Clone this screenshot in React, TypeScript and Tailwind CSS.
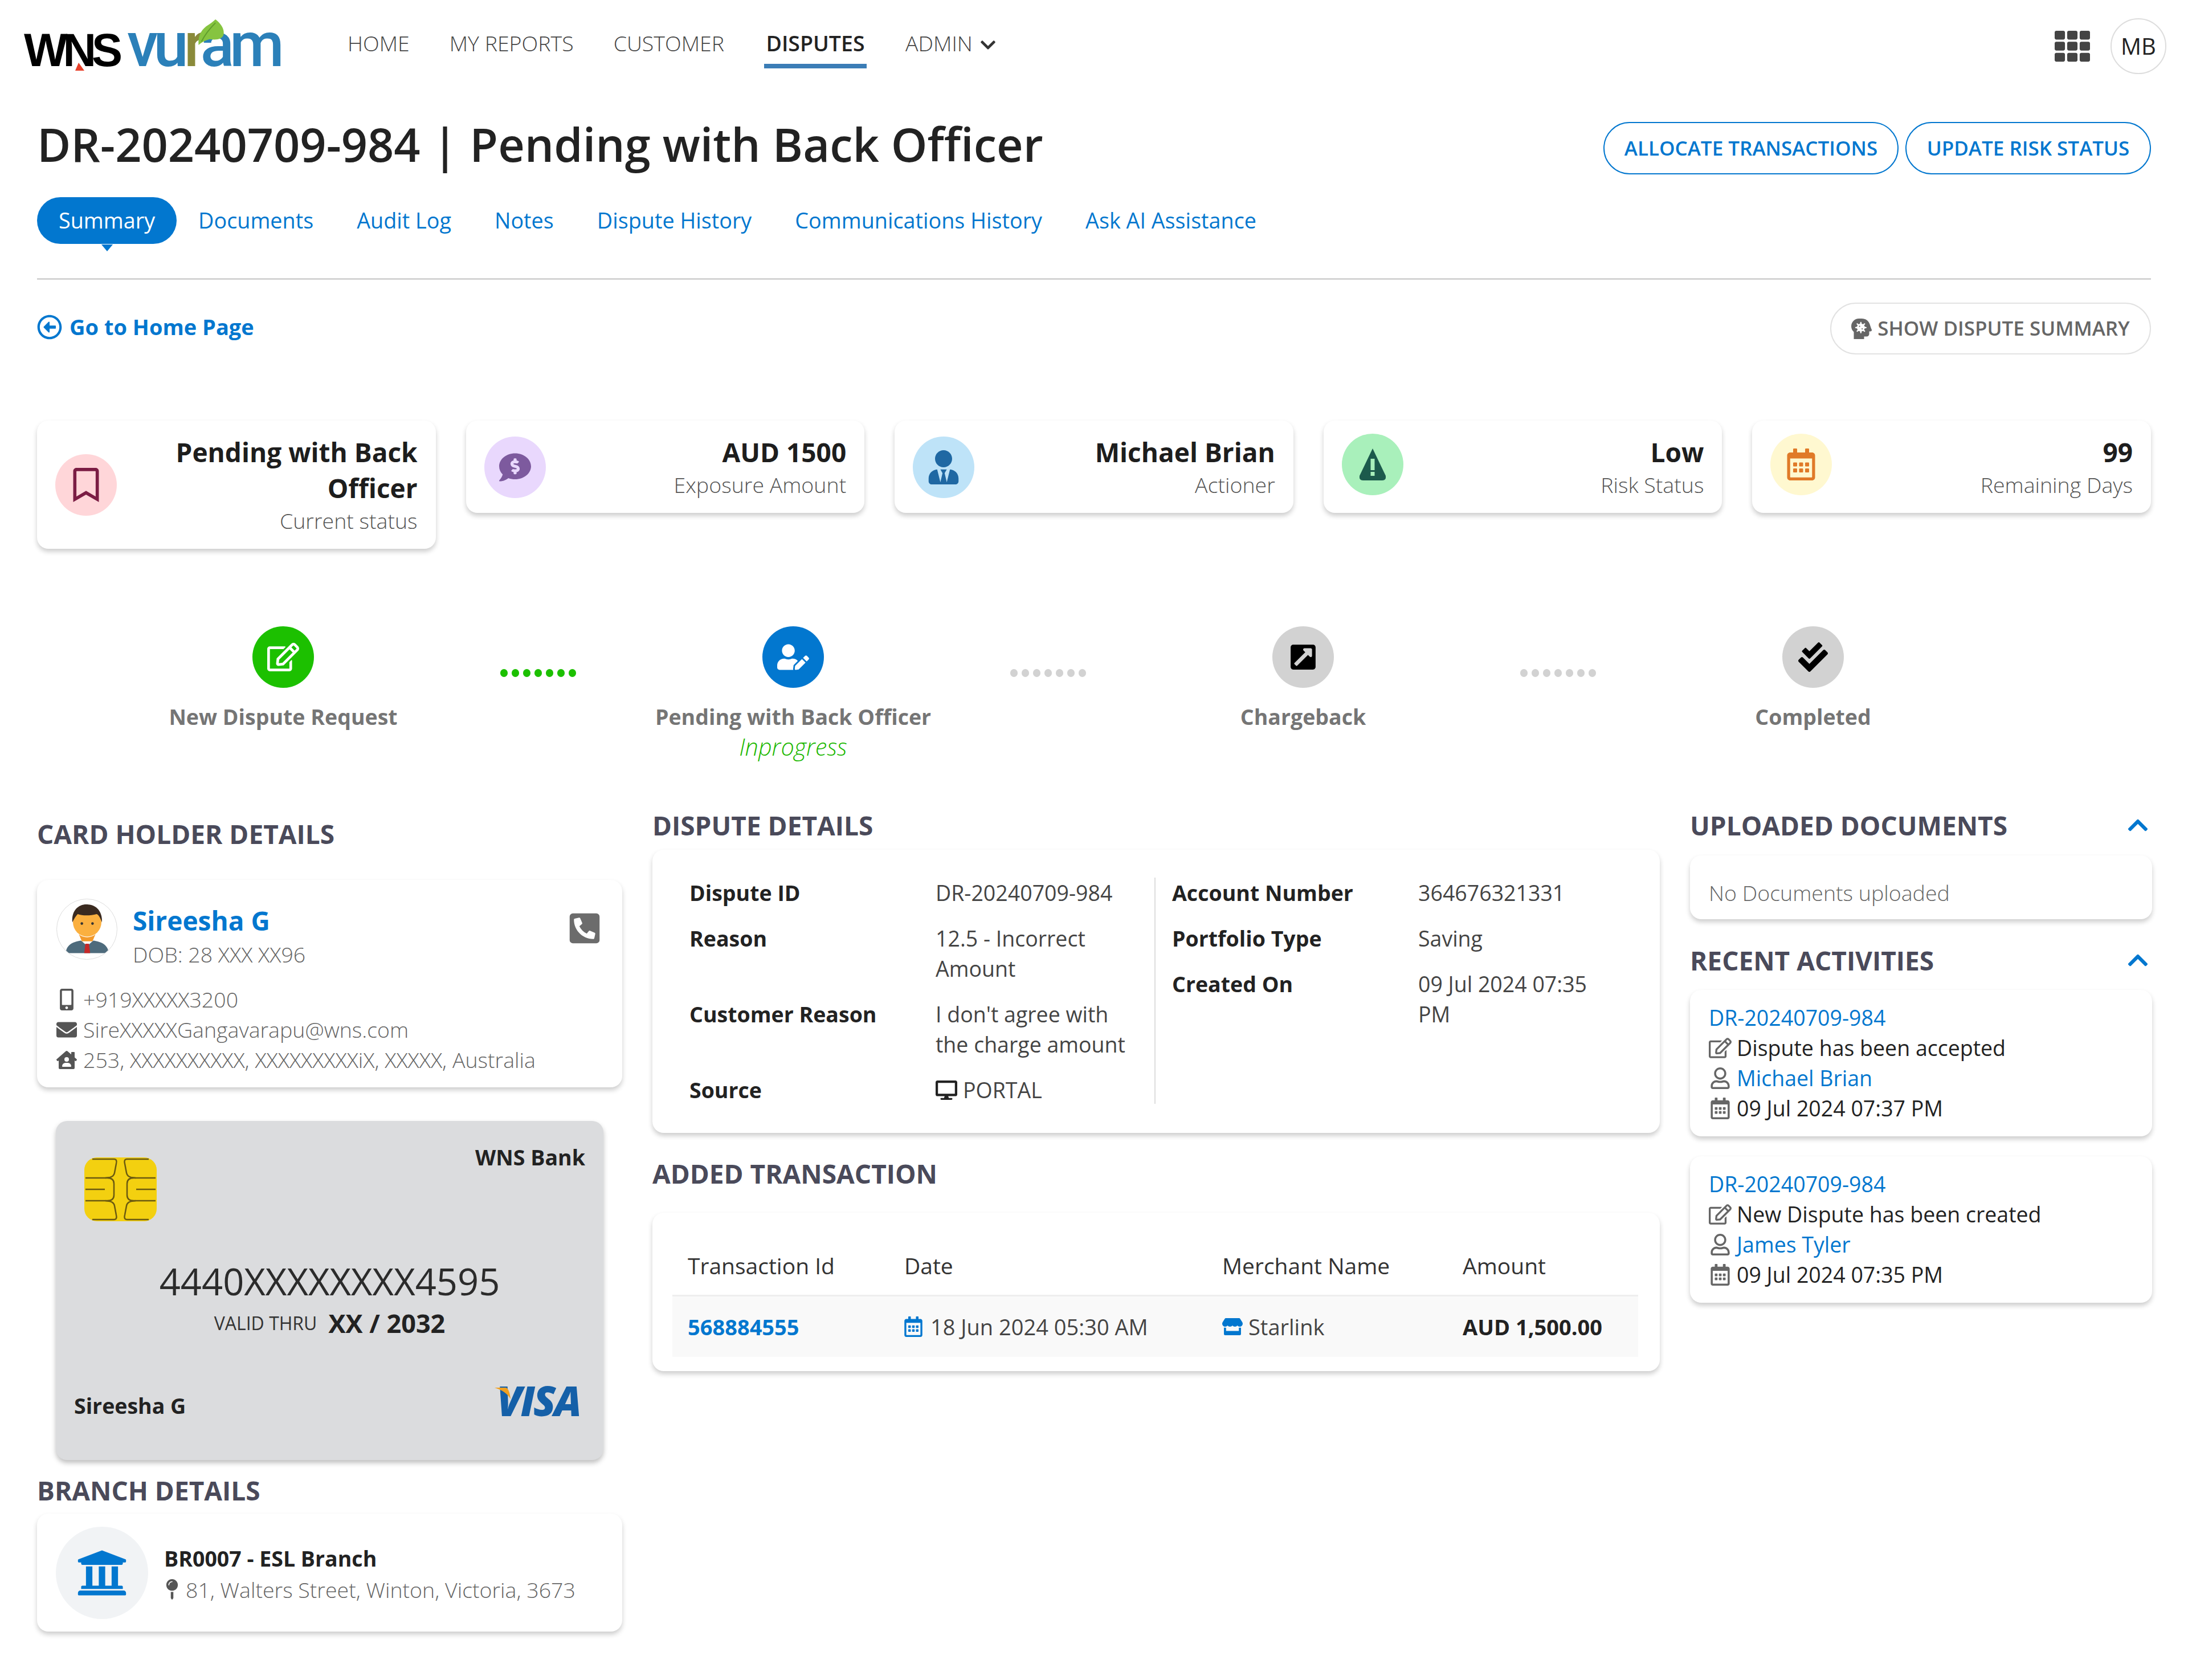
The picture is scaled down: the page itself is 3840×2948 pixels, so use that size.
import React from 'react';
import {
  FaRegBookmark, FaCommentDollar, FaUserTie, FaRegCalendarAlt,
  FaRegEdit, FaUserEdit, FaExternalLinkSquareAlt, FaCheckDouble, FaRegArrowAltCircleLeft,
  FaPhoneSquareAlt, FaMobileAlt, FaEnvelope, FaHouseUser, FaMapPin, FaDesktop, FaStore,
  FaTh, FaHeadSideVirus, FaChevronUp, FaChevronDown, FaUniversity, FaRegUser,
} from 'react-icons/fa';

function Logo() {
  return (
    <div className="relative flex items-baseline w-[568px] h-[96px] pt-[2px]">
      <span className="font-['Liberation_Sans'] font-bold text-[81px] leading-[90px] tracking-[-8px] text-black">WNS</span>
      {/* red notch in the N */}
      <svg viewBox="0 0 16 14" className="absolute left-[90px] top-[78px] w-[16px] h-[14px]"><path d="M0 14L6 0l10 14z" fill="#e8402a" /></svg>
      <span className="ml-[16px] font-['Roboto'] font-medium text-[110px] leading-[90px] tracking-[-8px] text-[#2b80b9]">
        vu<span className="text-[#8a8a3a]">r</span>am
      </span>
      {/* leaf over the r */}
      <svg viewBox="0 0 50 45" className="absolute left-[303px] top-[2px] w-[52px] h-[46px]">
        <path d="M3 44C2 30 6 20 16 12 22 8 28 4 32 0c8 6 16 16 14 26-2 8-12 10-24 8-6 2-12 4-19 10z" fill="#86c440" />
        <path d="M8 38C14 26 22 16 32 6" stroke="#5f9d2b" strokeWidth="2" fill="none" />
      </svg>
    </div>
  );
}

function Nav() {
  const items = ['HOME', 'MY REPORTS', 'CUSTOMER'];
  return (
    <nav className="flex gap-[70px] text-[37.5px] leading-[52px] font-light text-[#444] mt-[18px]">
      {items.map(t => <span key={t}>{t}</span>)}
      <span className="flex flex-col items-center font-semibold text-[#222]">
        DISPUTES
        <span className="w-[180px] h-[8px] mt-[10px] bg-[#3b7db6]" />
      </span>
      <span className="flex items-start gap-[12px] -ml-[2px]">
        ADMIN <FaChevronDown className="w-[30px] h-[30px] mt-[14px] text-[#333]" />
      </span>
    </nav>
  );
}

function Tabs() {
  const tabs = ['Documents', 'Audit Log', 'Notes', 'Dispute History', 'Communications History', 'Ask AI Assistance'];
  return (
    <div className="flex items-center mt-[36px] mx-[65px] h-[82px] text-[37.75px]">
      <span className="relative h-full flex items-center px-[38px] rounded-[41px] bg-[#0277cf] text-white">
        Summary
        <span className="absolute left-1/2 -translate-x-1/2 top-[83px] w-0 h-0 border-x-[10px] border-x-transparent border-t-[12px] border-t-[#0277cf]" />
      </span>
      {tabs.map(t => <span key={t} className="px-[38px] text-[#0277cf]">{t}</span>)}
    </div>
  );
}

function StatCard({ icon, bg, title, sub, raised }: { icon: React.ReactNode; bg: string; title: string; sub: string; raised?: boolean }) {
  return (
    <div className="flex items-center justify-between rounded-[20px] bg-white shadow-[0_5px_9px_rgba(0,0,0,0.2)] pl-[32px] pr-[32px] pt-[24px] pb-[23px]">
      <span className={`w-[108px] h-[108px] rounded-full flex items-center justify-center shrink-0 ${bg} ${raised ? '-translate-y-[5px]' : ''}`}>{icon}</span>
      <div className="text-right w-[500px]">
        <p className="text-[46px] leading-[63px] font-bold text-[#1d1d1d]">{title}</p>
        <p className="text-[37.5px] leading-[53px] font-light text-[#555] -mt-[1px]">{sub}</p>
      </div>
    </div>
  );
}

function Step({ icon, bg, label, extra }: { icon: React.ReactNode; bg: string; label: string; extra?: string }) {
  return (
    <div className="w-[760px] flex flex-col items-center">
      <span className={`w-[108px] h-[108px] rounded-full flex items-center justify-center ${bg}`}>{icon}</span>
      <p className="mt-[24px] text-[37.5px] leading-[53px] font-bold text-[#757575]">{label}</p>
      {extra && <p className="text-[41.5px] leading-[53px] italic font-light text-[#1cb800]">{extra}</p>}
    </div>
  );
}

function Dots({ color }: { color: string }) {
  return (
    <div className="w-[135px] h-[108px] flex items-end justify-center gap-[7px] pb-[19px]">
      {[0, 1, 2, 3, 4, 5, 6].map(i => <span key={i} className={`w-[13px] h-[14px] rounded-full ${color}`} />)}
    </div>
  );
}

function SectionTitle({ children }: { children: React.ReactNode }) {
  return <h2 className="text-[46px] leading-[54px] font-bold text-[#4a4a5a]">{children}</h2>;
}

function RiskIcon() {
  return (
    <svg viewBox="0 0 60 56" className="w-[60px] h-[56px]">
      <path d="M30 0l23 48q1 8-6 8H13q-7 0-6-8z" fill="#1c5a4c" />
      <rect x="26.5" y="18" width="7" height="20" fill="#a9f0bb" />
      <rect x="26.5" y="41" width="7" height="7" fill="#a9f0bb" />
    </svg>
  );
}

function Avatar() {
  return (
    <span className="w-[107px] h-[107px] rounded-full border border-[#ddd] overflow-hidden flex items-center justify-center shrink-0">
      <svg viewBox="0 0 100 100" className="w-[104px] h-[104px]">
        <path d="M14 90c0-15 15-22 36-22s36 7 36 22z" fill="#4e6b7c" />
        <path d="M39 68l11 10 11-10v-6H39z" fill="#fff" />
        <path d="M47 74h6l2 16h-10z" fill="#c62828" />
        <circle cx="50" cy="38" r="24" fill="#fbb040" />
        <path d="M25 38C23 16 38 6 52 8c13 1 24 11 23 30-3-8-6-13-9-14-11 3-24 3-32 0-3 3-6 8-9 14z" fill="#3a2a20" />
        <path d="M36 58c7 7 21 7 28 0l-5 12H41z" fill="#f39a2b" />
        <circle cx="41" cy="40" r="2.2" fill="#333" />
        <circle cx="59" cy="40" r="2.2" fill="#333" />
      </svg>
    </span>
  );
}

function Chip() {
  return (
    <svg viewBox="0 0 127 112" className="w-[127px] h-[112px] mt-[26px]">
      <rect width="127" height="112" rx="22" fill="#f3d010" />
      <g fill="none" stroke="#6b5a10" strokeWidth="2.5">
        <path d="M2 36h38q12 0 12 10v20q0 10-12 10H2" />
        <path d="M125 36H87q-12 0-12 10v20q0 10 12 10h38" />
        <path d="M2 56h34M91 56h34" />
        <path d="M14 3h38q6 0 4 8l-3 16q-1 6-8 8l-8 1" />
        <path d="M14 109h38q6 0 4-8l-3-16q-1-6-8-8l-8-1" />
        <path d="M113 3H75q-6 0-4 8l3 16q1 6 8 8l8 1" />
        <path d="M113 109H75q-6 0-4-8l3-16q1-6 8-8l8-1" />
      </g>
    </svg>
  );
}

function CardHolder() {
  return (
    <div className="w-[1027px] shrink-0 pt-[15px]">
      <SectionTitle>CARD HOLDER DETAILS</SectionTitle>
      <div className="mt-[54px] h-[364px] rounded-[20px] bg-white shadow-[0_5px_9px_rgba(0,0,0,0.2)] pl-[34px] pr-[36px] pt-[33px]">
        <div className="flex items-start h-[150px]">
          <Avatar />
          <div className="ml-[27px] flex-1">
            <p className="text-[46px] leading-[56px] font-bold text-[#0277cf] mt-[-18px] pt-[28px]">Sireesha G</p>
            <p className="text-[37.5px] leading-[54px] font-light text-[#666] mt-[5px]">DOB: 28 XXX XX96</p>
          </div>
          <FaPhoneSquareAlt className="w-[60px] h-[60px] mt-[22px] text-[#6c6c6c]" />
        </div>
        <div className="text-[37.5px] leading-[53px] font-light text-[#666]">
          <p className="flex items-center gap-[11px]"><FaMobileAlt className="w-[36px] h-[38px] text-[#555]" />+919XXXXX3200</p>
          <p className="flex items-center gap-[11px]"><FaEnvelope className="w-[36px] h-[36px] text-[#555]" />SireXXXXXGangavarapu@wns.com</p>
          <p className="flex items-center gap-[11px]"><FaHouseUser className="w-[36px] h-[36px] text-[#555]" />253, XXXXXXXXXX, XXXXXXXXXiX, XXXXX, Australia</p>
        </div>
      </div>

      <div className="mt-[59px] mx-[33px] h-[595px] rounded-[20px] bg-[#dbdcde] shadow-[0_5px_9px_rgba(0,0,0,0.25)]">
        <div className="flex justify-between items-start pt-[38px] pl-[50px] pr-[32px]">
          <Chip />
          <span className="text-[37.5px] leading-[52px] font-bold text-[#222]">WNS Bank</span>
        </div>
        <p className="mt-[61px] text-center text-[65px] leading-[88px] text-[#2b2b2b]">4440XXXXXXXX4595</p>
        <div className="mt-[4px] h-[52px] flex items-center justify-center gap-[20px]">
          <span className="text-[32px] text-[#333]">VALID THRU</span>
          <span className="text-[45px] font-bold text-[#222]">XX / 2032</span>
        </div>
        <div className="mt-[79px] flex justify-between items-start pl-[32px] pr-[41px]">
          <span className="mt-[14px] text-[37.5px] leading-[52px] font-bold text-[#222]">Sireesha G</span>
          <span className="relative font-['Open_Sans'] italic font-extrabold text-[72px] leading-[60px] tracking-[-3px] text-[#1560a8]">
            VISA
            <svg viewBox="0 0 30 20" className="absolute left-[-4px] top-[8px] w-[30px] h-[20px]"><path d="M0 0h20q6 2 8 20Q20 6 0 0z" fill="#f0a020" /></svg>
          </span>
        </div>
      </div>

      <div className="mt-[26px]"><SectionTitle>BRANCH DETAILS</SectionTitle></div>
      <div className="mt-[14px] h-[207px] rounded-[20px] bg-white shadow-[0_5px_9px_rgba(0,0,0,0.2)] pl-[33px] flex items-center">
        <span className="w-[162px] h-[162px] rounded-full bg-[#f1f3f5] flex items-center justify-center shrink-0">
          <FaUniversity className="w-[90px] h-[90px] text-[#0277cf]" />
        </span>
        <div className="ml-[28px] mt-[4px]">
          <p className="text-[37.5px] leading-[55px] font-bold text-[#222]">BR0007 - ESL Branch</p>
          <p className="flex items-center gap-[10px] text-[37.5px] leading-[55px] font-light text-[#666]">
            <FaMapPin className="w-[28px] h-[36px] text-[#555]" />81, Walters Street, Winton, Victoria, 3673
          </p>
        </div>
      </div>
    </div>
  );
}

function Row({ label, children }: { label: string; children: React.ReactNode }) {
  return (
    <div className="flex text-[37.5px] leading-[53px]">
      <span className="w-[432px] font-bold text-[#222] shrink-0">{label}</span>
      <span className="w-[350px] text-[#444]">{children}</span>
    </div>
  );
}

function Middle() {
  return (
    <div className="w-[1768px] shrink-0">
      <SectionTitle>DISPUTE DETAILS</SectionTitle>
      <div className="mt-[16px] h-[497px] rounded-[20px] bg-white shadow-[0_5px_9px_rgba(0,0,0,0.2)] pl-[65px] pt-[49px] flex items-start">
        <div className="w-[818px] h-[397px] border-r-2 border-[#ddd] flex flex-col gap-[27px]">
          <Row label="Dispute ID">DR-20240709-984</Row>
          <Row label="Reason">12.5 - Incorrect Amount</Row>
          <Row label="Customer Reason">I don't agree with the charge amount</Row>
          <Row label="Source"><span className="flex items-center gap-[10px]"><FaDesktop className="w-[38px] h-[38px] text-[#222]" />PORTAL</span></Row>
        </div>
        <div className="pl-[29px] flex flex-col gap-[27px]">
          <Row label="Account Number">364676321331</Row>
          <Row label="Portfolio Type">Saving</Row>
          <Row label="Created On">09 Jul 2024 07:35 PM</Row>
        </div>
      </div>

      <div className="mt-[44px]"><SectionTitle>ADDED TRANSACTION</SectionTitle></div>
      <div className="mt-[42px] h-[278px] rounded-[20px] bg-white shadow-[0_5px_9px_rgba(0,0,0,0.2)] pl-[35px] pr-[38px] pt-[66px] text-[38px] leading-[53px]">
        <div className="grid grid-cols-[380px_558px_422px_1fr] px-[27px] h-[81px] border-b-[3px] border-[#eee] text-[#333] font-medium text-[39px]">
          <span>Transaction Id</span><span>Date</span><span>Merchant Name</span><span>Amount</span>
        </div>
        <div className="grid grid-cols-[380px_558px_422px_1fr] px-[27px] h-[106px] items-center bg-[#f9f9f9] text-[#444]">
          <span className="font-bold text-[#0277cf]">568884555</span>
          <span className="flex items-center gap-[14px]"><FaRegCalendarAlt className="w-[32px] h-[36px] text-[#0277cf]" />18 Jun 2024 05:30 AM</span>
          <span className="flex items-center gap-[10px]"><FaStore className="w-[36px] h-[34px] text-[#0277cf]" />Starlink</span>
          <span className="font-bold text-[#222]">AUD 1,500.00</span>
        </div>
      </div>
    </div>
  );
}

function Activity({ who, what, when }: { who: string; what: string; when: string }) {
  return (
    <div className="h-[257px] rounded-[20px] bg-white shadow-[0_5px_9px_rgba(0,0,0,0.2)] pl-[33px] pt-[22px] text-[37.5px] leading-[53px] text-[#222]">
      <p className="text-[#0277cf]">DR-20240709-984</p>
      <p className="flex items-center gap-[9px]"><FaRegEdit className="w-[40px] h-[38px] text-[#666]" />{what}</p>
      <p className="flex items-center gap-[9px] text-[#0277cf]"><FaRegUser className="w-[40px] h-[38px] text-[#666]" />{who}</p>
      <p className="flex items-center gap-[9px]"><FaRegCalendarAlt className="w-[40px] h-[38px] text-[#666]" />{when}</p>
    </div>
  );
}

function RightCol() {
  return (
    <div className="w-[811px] shrink-0">
      <div className="flex justify-between items-center pr-[2px]">
        <SectionTitle>UPLOADED DOCUMENTS</SectionTitle>
        <FaChevronUp className="w-[46px] h-[40px] text-[#0277cf]" />
      </div>
      <div className="mt-[26px] h-[112px] rounded-[20px] bg-white shadow-[0_5px_9px_rgba(0,0,0,0.2)] pl-[33px] pt-[39px] text-[37.5px] leading-[53px] font-light text-[#666]">
        No Documents uploaded
      </div>
      <div className="mt-[45px] flex justify-between items-center pr-[2px]">
        <SectionTitle>RECENT ACTIVITIES</SectionTitle>
        <FaChevronUp className="w-[46px] h-[40px] text-[#0277cf]" />
      </div>
      <div className="mt-[25px] flex flex-col gap-[35px]">
        <Activity what="Dispute has been accepted" who="Michael Brian" when="09 Jul 2024 07:37 PM" />
        <Activity what="New Dispute has been created" who="James Tyler" when="09 Jul 2024 07:35 PM" />
      </div>
    </div>
  );
}

export default function App() {
  return (
    <div className="w-[3840px] h-[2948px] overflow-hidden bg-white font-['Open_Sans',sans-serif]">
      <header className="h-[152px] flex items-start pl-[42px] pr-[38px] pt-[32px]">
        <Logo />
        <Nav />
        <div className="ml-auto flex items-start gap-[36px]">
          <FaTh className="w-[62px] h-[62px] mt-[18px] text-[#444]" />
          <span className="w-[98px] h-[98px] rounded-full border-2 border-[#ddd] flex items-center justify-center text-[40px] text-[#222]">MB</span>
        </div>
      </header>

      <div className="flex justify-between items-start px-[65px] pt-[46px]">
        <h1 className="text-[81px] leading-[110px] font-semibold text-[#222]">DR-20240709-984 | Pending with Back Officer</h1>
        <div className="flex gap-[12px] mt-[16px] text-[35px] font-semibold text-[#0277cf]">
          <button className="h-[92px] w-[518px] rounded-[46px] border-2 border-[#0277cf]">ALLOCATE TRANSACTIONS</button>
          <button className="h-[92px] w-[431px] rounded-[46px] border-2 border-[#0277cf]">UPDATE RISK STATUS</button>
        </div>
      </div>

      <div className="h-[2px]" />
      <Tabs />

      <div className="mt-[60px] mx-[65px] h-[3px] bg-[#d4d4d4]" />

      <div className="mt-[40px] mx-[65px] h-[91px] flex items-center justify-between">
        <a className="flex items-center gap-[13px] text-[38px] font-bold text-[#0277cf] mt-[-6px]">
          <FaRegArrowAltCircleLeft className="w-[44px] h-[44px]" />Go to Home Page
        </a>
        <button className="h-[91px] w-[563px] rounded-[46px] border-2 border-[#e2e2e2] flex items-center justify-center gap-[10px] text-[35px] font-semibold text-[#666]">
          <FaHeadSideVirus className="w-[36px] h-[36px]" />SHOW DISPUTE SUMMARY
        </button>
      </div>

      <div className="mt-[116px] mx-[65px] grid grid-cols-5 gap-[53px] items-start">
        <StatCard bg="bg-[#ffd6d9]" title="Pending with Back Officer" sub="Current status" icon={<FaRegBookmark className="w-[46px] h-[60px] text-[#7b1d44]" />} />
        <StatCard bg="bg-[#e9d8fd]" title="AUD 1500" sub="Exposure Amount" icon={<FaCommentDollar className="w-[56px] h-[56px] text-[#7d5a9e]" />} />
        <StatCard bg="bg-[#bee3f8]" title="Michael Brian" sub="Actioner" icon={<FaUserTie className="w-[54px] h-[60px] text-[#1f68a3]" />} />
        <StatCard raised bg="bg-[#a9f0bb]" title="Low" sub="Risk Status" icon={<RiskIcon />} />
        <StatCard raised bg="bg-[#fff8d0]" title="99" sub="Remaining Days" icon={<FaRegCalendarAlt className="w-[50px] h-[56px] text-[#e07a28]" />} />
      </div>

      <div className="mt-[136px] ml-[117px] flex items-start">
        <Step bg="bg-[#1cc000]" label="New Dispute Request" icon={<FaRegEdit className="w-[56px] h-[52px] text-white" />} />
        <Dots color="bg-[#1cc000]" />
        <Step bg="bg-[#0277cf]" label="Pending with Back Officer" extra="Inprogress" icon={<FaUserEdit className="w-[56px] h-[48px] text-white" />} />
        <Dots color="bg-[#d2d2d2]" />
        <Step bg="bg-[#d2d2d2]" label="Chargeback" icon={<FaExternalLinkSquareAlt className="w-[50px] h-[50px] text-black" />} />
        <Dots color="bg-[#d2d2d2]" />
        <Step bg="bg-[#d2d2d2]" label="Completed" icon={<FaCheckDouble className="w-[52px] h-[52px] text-black" />} />
      </div>

      <div className="mt-[84px] mx-[65px] flex gap-[53px] items-start">
        <CardHolder />
        <Middle />
        <RightCol />
      </div>
    </div>
  );
}
